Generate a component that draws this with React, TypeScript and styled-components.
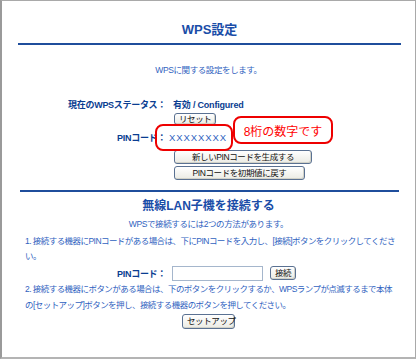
import styled, { createGlobalStyle } from "styled-components";

const GlobalStyle = createGlobalStyle`
	body {
		margin: 0;
		background: #ffffff;
		font-family: "Liberation Sans", "Noto Sans CJK JP", sans-serif;
	}
`;

const Frame = styled.div`
	box-sizing: border-box;
	width: 416px;
	height: 359px;
	border: 1px solid #a9a9a9;
	border-left: 2px solid #9a9a9a;
	border-bottom: 2px solid #b4b4b4;
	background: #ffffff;
`;

const Title = styled.h1`
	margin: 21px 14px 0 16px;
	padding-bottom: 5px;
	border-bottom: 2px solid #1f4e9c;
	font-size: 13px;
	line-height: 16px;
	font-weight: bold;
	color: #1a4da8;
	text-align: center;
`;

const Heading = styled.h2`
	margin: 6px 0 0;
	font-size: 12px;
	line-height: 16px;
	font-weight: bold;
	color: #1a4da8;
	text-align: center;
`;

const Divider = styled.hr`
	margin: 10px 16px 0 18px;
	border: none;
	border-top: 2px solid #1f4e9c;
	height: 0;
`;

const Note = styled.p<{ $top: number }>`
	margin: ${(p) => p.$top}px 0 0;
	font-size: 8.5px;
	line-height: 12px;
	letter-spacing: -0.4px;
	color: #2f62c0;
	text-align: center;
`;

const Para = styled.p<{ $top: number; $lh: number }>`
	margin: ${(p) => p.$top}px 0 0;
	padding: 0 19px 0 23px;
	font-size: 8.5px;
	line-height: ${(p) => p.$lh}px;
	letter-spacing: -0.55px;
	color: #2f62c0;
`;

const Row = styled.div<{ $top: number }>`
	position: relative;
	display: flex;
	align-items: center;
	gap: 7px;
	margin-top: ${(p) => p.$top}px;
	height: 14px;
`;

const Label = styled.span`
	width: 164px;
	text-align: right;
	font-size: 9px;
	font-weight: bold;
	letter-spacing: -0.3px;
	color: #0a3d91;
`;

const Strong = styled.span`
	font-size: 9px;
	font-weight: bold;
	letter-spacing: -0.2px;
	color: #0a3d91;
`;

const Pin = styled.span`
	margin-left: -4px;
	font-size: 9.5px;
	letter-spacing: 0.9px;
	color: #2f62c0;
`;

const ButtonStack = styled.div<{ $top: number; $gap: number }>`
	display: flex;
	flex-direction: column;
	align-items: flex-start;
	gap: ${(p) => p.$gap}px;
	margin-top: ${(p) => p.$top}px;
	padding-left: 172px;
`;

const Button = styled.button<{ $h: number; $w?: number }>`
	box-sizing: border-box;
	width: ${(p) => (p.$w ? `${p.$w}px` : "auto")};
	height: ${(p) => p.$h}px;
	padding: 0 4px;
	border: 1px solid #5a7192;
	border-radius: 3px;
	background: linear-gradient(#ffffff, #ebebe4);
	box-shadow: inset -1px -1px 0 #d2d2c8;
	font-family: "Liberation Sans", "Noto Sans CJK JP", sans-serif;
	font-size: 8.5px;
	line-height: 1;
	letter-spacing: -0.4px;
	color: #111111;
	white-space: nowrap;
`;

const Input = styled.input`
	box-sizing: border-box;
	width: 91px;
	height: 15px;
	margin-left: -1px;
	border: 1px solid #a5b6cc;
	background: #ffffff;
`;

const Center = styled.div`
	display: flex;
	justify-content: center;
	margin-top: 1px;
`;

const Callout = styled.div<{ $left: number; $top: number; $w: number; $h: number }>`
	position: absolute;
	left: ${(p) => p.$left}px;
	top: ${(p) => p.$top}px;
	box-sizing: border-box;
	width: ${(p) => p.$w}px;
	height: ${(p) => p.$h}px;
	border: 2px solid #ee0000;
	border-radius: 8px;
	display: flex;
	align-items: center;
	justify-content: center;
	font-size: 12px;
	color: #ff0000;
`;

export default function App() {
	return (
		<>
			<GlobalStyle />
			<Frame>
				<Title>WPS設定</Title>
				<Note $top={19}>WPSに関する設定をします。</Note>

				<Row $top={21}>
					<Label>現在のWPSステータス：</Label>
					<Strong>有効 / Configured</Strong>
				</Row>
				<ButtonStack $top={2} $gap={0}>
					<Button $h={12}>リセット</Button>
				</ButtonStack>
				<Row $top={5}>
					<Label>PINコード：</Label>
					<Pin>XXXXXXXX</Pin>
					<Callout $left={153} $top={-6} $w={78} $h={27} />
					<Callout $left={231} $top={-14} $w={100} $h={28}>8桁の数字です</Callout>
				</Row>
				<ButtonStack $top={6} $gap={2}>
					<Button $h={14} $w={138}>新しいPINコードを生成する</Button>
					<Button $h={14} $w={131}>PINコードを初期値に戻す</Button>
				</ButtonStack>

				<Divider />
				<Heading>無線LAN子機を接続する</Heading>
				<Note $top={4}>WPSで接続するには2つの方法があります。</Note>
				<Para $top={4} $lh={15}>
					1. 接続する機器にPINコードがある場合は、下にPINコードを入力し、[接続]ボタンをクリックしてください。
				</Para>
				<Row $top={2}>
					<Label>PINコード：</Label>
					<Input />
					<Button $h={14}>接続</Button>
				</Row>
				<Para $top={1} $lh={16}>
					2. 接続する機器にボタンがある場合は、下のボタンをクリックするか、WPSランプが点滅するまで本体の[セットアップ]ボタンを押し、接続する機器のボタンを押してください。
				</Para>
				<Center>
					<Button $h={15} $w={53}>セットアップ</Button>
				</Center>
			</Frame>
		</>
	);
}
